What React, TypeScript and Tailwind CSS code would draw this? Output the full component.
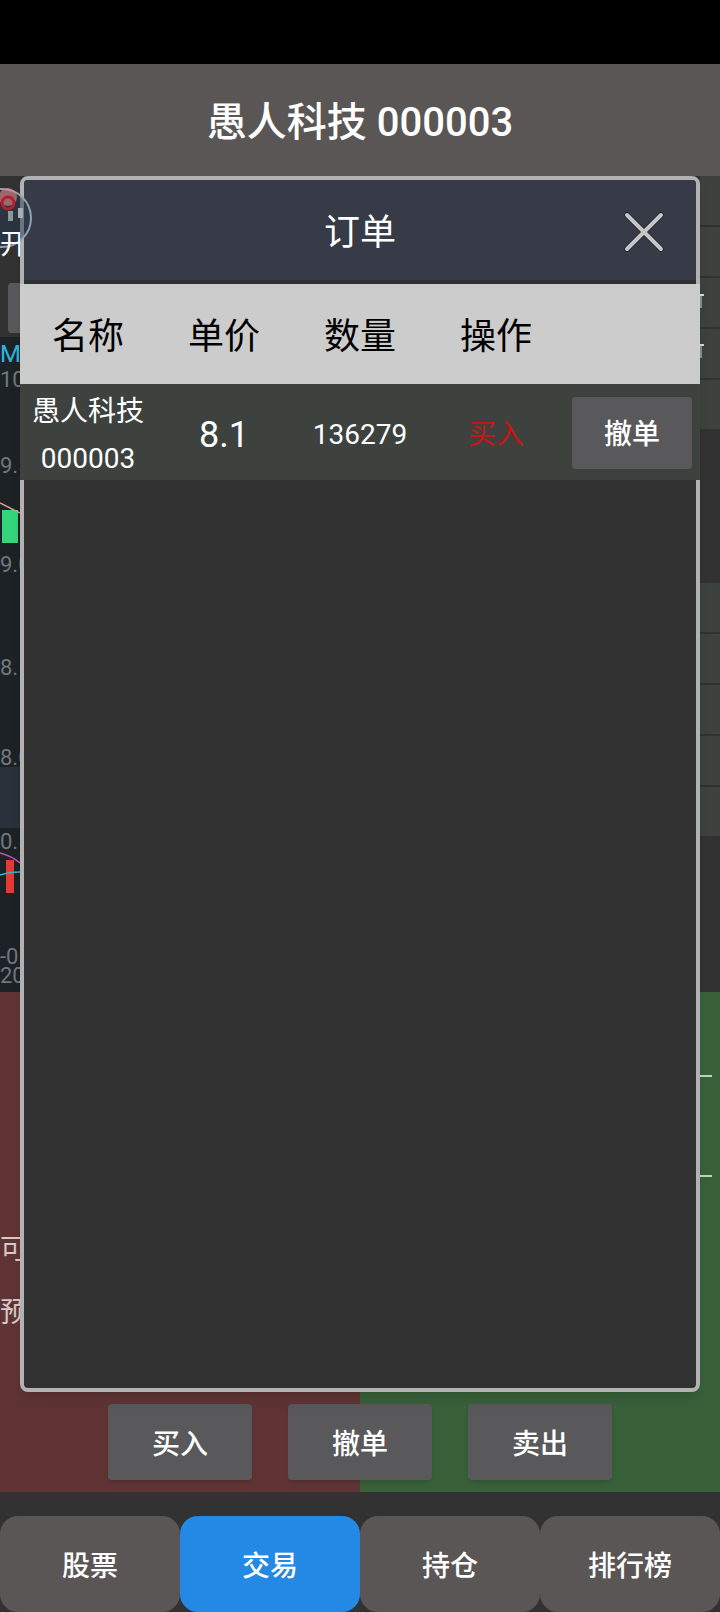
const fontStack = 'font-["Roboto","Noto_Sans_CJK_SC",sans-serif]';

const rightRows = [0, 1, 2, 3, 4];

function RowStack({ marks = false }: { marks?: boolean }) {
    return (
        <div className="flex flex-col gap-[2px]">
            {rightRows.map(i => (
                <div key={i} className="relative h-[49px] bg-[#3e423f]">
                    {marks && (i === 2 || i === 3) && (
                        <>
                            <div className={`absolute left-0 w-1 h-[2px] bg-[#d8dad8] ${i === 2 ? 'top-[16px]' : 'top-[15px]'}`} />
                            <div className={`absolute left-0 w-[2px] h-3 bg-[#8b8e8b] ${i === 2 ? 'top-[18px]' : 'top-[17px]'}`} />
                        </>
                    )}
                </div>
            ))}
        </div>
    );
}

function ChartLabel({ top, text, color = 'text-[#72777c]' }: { top: string; text: string; color?: string }) {
    return <span className={`absolute left-0 text-[22px] leading-[28px] whitespace-nowrap ${top} ${color}`}>{text}</span>;
}

function LeftColumn() {
    return (
        <div className="w-5 flex flex-col overflow-hidden">
            <div className="h-[161px] relative flex-none">
                <div className="absolute left-2 top-[107px] w-5 h-[50px] rounded bg-[#59595b]" />
            </div>
            <div className="relative h-[430px] flex-none bg-[#1d2227]">
                <span className="absolute left-0 top-[3px] text-[24px] leading-[28px] whitespace-nowrap text-[#2bb6e0]">MA</span>
                <ChartLabel top="top-[29px]" text="10" />
                <ChartLabel top="top-[115px]" text="9.5" />
                <ChartLabel top="top-[214px]" text="9.0" />
                <ChartLabel top="top-[317px]" text="8.5" />
                <ChartLabel top="top-[407px]" text="8.0" />
                <svg className="absolute left-0 top-0" width="20" height="430" viewBox="0 0 20 430">
                    <rect x="2" y="173" width="16" height="33" fill="#33d67a" />
                    <path d="M0 166 L20 176" stroke="#d9a08f" strokeWidth="1.5" fill="none" />
                </svg>
            </div>
            <div className="h-[61px] flex-none bg-[#2b313b]" />
            <div className="relative h-[164px] flex-none bg-[#1d2227]">
                <ChartLabel top="top-0" text="0.1" />
                <ChartLabel top="top-[115px]" text="-0.1" />
                <ChartLabel top="top-[134px]" text="20" />
                <svg className="absolute left-0 top-0" width="20" height="164" viewBox="0 0 20 164">
                    <rect x="6" y="32" width="8" height="33" fill="#e53935" />
                    <path d="M0 25 C8 27 14 30 20 35" stroke="#c452b8" strokeWidth="1.5" fill="none" />
                    <path d="M0 47 C6 45 12 44 20 44" stroke="#35b5c4" strokeWidth="1.5" fill="none" />
                </svg>
            </div>
        </div>
    );
}

function OrderModal() {
    return (
        <div className="absolute left-5 top-[176px] w-[680px] h-[1216px] border-4 border-[#b2b2b2] rounded-lg bg-[#313131] shadow-lg">
            <div className="relative h-[104px] border-b-4 border-[#2f3033] bg-[#363b47] rounded-t flex items-center justify-center pt-[6px]">
                <span className="text-[36px] text-white">订单</span>
                <svg className="absolute left-[600px] top-[32px]" width="40" height="40" viewBox="0 0 40 40">
                    <path d="M3 3 L37 37 M37 3 L3 37" stroke="#23262d" strokeWidth="6" strokeLinecap="round" />
                    <path d="M3 3 L37 37 M37 3 L3 37" stroke="#c4c6c8" strokeWidth="4" strokeLinecap="round" />
                </svg>
            </div>
            <div className="-mx-1 h-[100px] pt-[6px] bg-[#cccccc] grid grid-cols-5 items-center text-center text-[36px] text-black">
                <span>名称</span>
                <span>单价</span>
                <span>数量</span>
                <span>操作</span>
            </div>
            <div className="-mx-1 h-24 bg-[#3e423f] grid grid-cols-5 items-center text-center text-white">
                <div className="text-[28px] leading-[47px] pt-1">
                    <div>愚人科技</div>
                    <div>000003</div>
                </div>
                <span className="text-[36px] pt-1">8.1</span>
                <span className="text-[28px] pt-1">136279</span>
                <span className="text-[28px] pt-1 text-[#c91414]">买入</span>
                <div className="flex justify-end pr-2">
                    <button className="w-[120px] h-[72px] pt-1 rounded bg-[#59595b] text-[28px] font-medium text-white">撤单</button>
                </div>
            </div>
        </div>
    );
}

export default function App() {
    const actions = ['买入', '撤单', '卖出'];
    const tabs = ['股票', '交易', '持仓', '排行榜'];

    return (
        <div className={`relative w-[720px] h-[1612px] overflow-hidden bg-[#323232] flex flex-col ${fontStack}`}>
            <div className="h-16 flex-none bg-black" />
            <div className="h-28 flex-none pt-[6px] bg-[#5a5655] flex items-center justify-center">
                <h1 className="text-[40px] font-medium text-white">愚人科技 000003</h1>
            </div>

            <div className="h-[816px] flex-none flex justify-between">
                <LeftColumn />
                <div className="w-5 flex flex-col gap-[154px]">
                    <RowStack marks />
                    <RowStack />
                </div>
            </div>

            <div className="relative h-[500px] flex-none flex flex-col justify-between bg-[linear-gradient(90deg,#603434_50%,#38613a_50%)] pb-3">
                <div className="pt-[226px] w-5 overflow-hidden text-[28px] leading-[63px] text-[#d8c8c8]">
                    <div className="whitespace-nowrap">可用</div>
                    <div className="whitespace-nowrap">预计</div>
                </div>
                <div className="absolute right-2 top-[83px] w-3 h-[2px] bg-[#bcd6be]" />
                <div className="absolute right-2 top-[183px] w-3 h-[2px] bg-[#bcd6be]" />
                <div className="flex justify-center gap-9">
                    {actions.map(label => (
                        <button key={label} className="w-36 h-[76px] pt-[6px] rounded bg-[#59595b] text-[28px] font-medium text-white shadow-md">
                            {label}
                        </button>
                    ))}
                </div>
            </div>

            <div className="flex-1 pt-6 grid grid-cols-4">
                {tabs.map(tab => (
                    <button
                        key={tab}
                        className={`rounded-[18px] pt-[6px] text-[28px] font-medium text-white ${tab === '交易' ? 'bg-[#2389e4]' : 'bg-[#5a5655]'}`}
                    >
                        {tab}
                    </button>
                ))}
            </div>

            <OrderModal />

            {/* floating button, half off the left edge */}
            <div className="absolute left-[-28px] top-[188px] w-[60px] h-[60px] rounded-full border-2 border-[#97a0aa] bg-[#22384f]/50" />
            <svg className="absolute left-0 top-[188px]" width="32" height="60" viewBox="0 0 32 60">
                <circle cx="8" cy="9" r="9" fill="#e88a8a" opacity="0.6" />
                <circle cx="8" cy="15" r="6" fill="none" stroke="#b3202f" strokeWidth="3" />
                <rect x="8" y="23" width="5" height="10" fill="#8f959b" />
                <rect x="18" y="20" width="5" height="10" fill="#a9adb1" />
            </svg>
            <div className="absolute left-0 top-[227px] w-5 overflow-hidden text-[28px] leading-[36px] text-white">
                <span className="whitespace-nowrap">开启</span>
            </div>
        </div>
    );
}
